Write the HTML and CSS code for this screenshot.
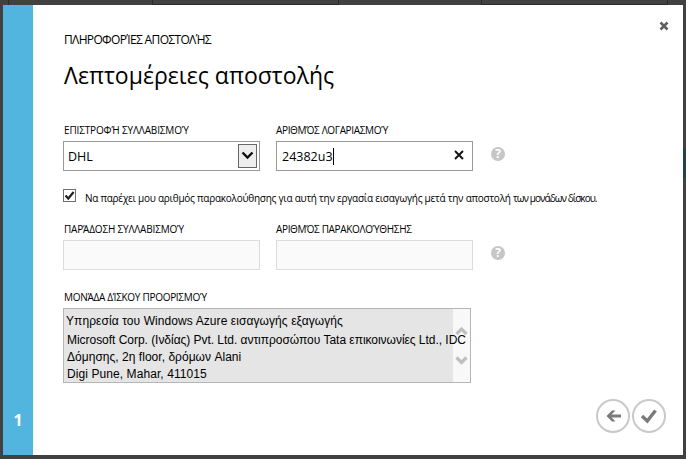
FILE: index.html
```html
<!DOCTYPE html>
<html lang="el">
<head>
<meta charset="utf-8">
<title>Λεπτομέρειες αποστολής</title>
<link rel="stylesheet" href="styles.css">
</head>
<body>
<div class="tile tile-a"></div>
<div class="tile tile-b"></div>
<div class="tile tile-c"></div>
<div class="edge"></div>
<main class="dialog">
  <aside class="step">1</aside>
  <section class="content">
    <svg class="close" viewBox="0 0 10 10"><path d="M1.5 1.5L8.5 8.5M8.5 1.5L1.5 8.500" stroke="#5f5f5f" stroke-width="2.6"/></svg>
    <p class="eyebrow"><span>ΠΛΗΡΟΦΟΡΊΕΣ ΑΠΟΣΤΟΛΉΣ</span></p>
    <h1><span>Λεπτομέρειες αποστολής</span></h1>
    <div class="row">
      <div class="field">
        <label class="l1">ΕΠΙΣΤΡΟΦΉ ΣΥΛΛΑΒΙΣΜΟΎ</label>
        <div class="box select"><span>DHL</span>
          <i class="drop"><svg viewBox="0 0 17 22"><path d="M3.5 7.500L8.500 12.500L13.500 7.500" fill="none" stroke="#111" stroke-width="2.4"/></svg></i>
        </div>
      </div>
      <div class="field">
        <label class="l2">ΑΡΙΘΜΌΣ ΛΟΓΑΡΙΑΣΜΟΎ</label>
        <div class="box"><span class="number">24382u3</span><b class="caret"></b>
          <svg class="clear" viewBox="0 0 10 10"><path d="M1 1L9 9M9 1L1 9" stroke="#111" stroke-width="1.9"/></svg>
        </div>
      </div>
      <span class="help">?</span>
    </div>
    <div class="check">
      <svg viewBox="0 0 13 13"><rect x=".5" y=".5" width="12" height="12" fill="#fff" stroke="#707070"/><path d="M2.500 6.500L5.300 9.500L10.600 3" fill="none" stroke="#222" stroke-width="2.200"/></svg>
      <span>Να παρέχει μου αριθμός παρακολούθησης για αυτή την εργασία εισαγωγής μετά την αποστολή <em>των μονάδων δίσκου.</em></span>
    </div>
    <div class="row row2">
      <div class="field">
        <label class="l3">ΠΑΡΆΔΟΣΗ ΣΥΛΛΑΒΙΣΜΟΎ</label>
        <div class="box off"></div>
      </div>
      <div class="field">
        <label class="l4">ΑΡΙΘΜΌΣ ΠΑΡΑΚΟΛΟΎΘΗΣΗΣ</label>
        <div class="box off"></div>
      </div>
      <span class="help">?</span>
    </div>
    <label class="l5">ΜΟΝΆΔΑ ΔΊΣΚΟΥ ΠΡΟΟΡΙΣΜΟΎ</label>
    <div class="address">
      <div class="scroll">
        <svg viewBox="0 0 17 73"><path d="M3.500 25L8.500 20L13.500 25M3.500 48.500L8.500 53.500L13.500 48.500" fill="none" stroke="#bfbfbf" stroke-width="3.200"/></svg>
      </div>
      <p class="a1">Υπηρεσία του Windows Azure εισαγωγής εξαγωγής</p>
      <p class="a2">Microsoft Corp. (Ινδίας) Pvt. Ltd. αντιπροσώπου Tata επικοινωνίες Ltd., IDC</p>
      <p class="a3">Δόμησης, 2η floor, δρόμων Alani</p>
      <p class="a4">Digi Pune, Mahar, 411015</p>
    </div>
    <div class="actions">
      <svg viewBox="0 0 34 34"><circle cx="17" cy="17" r="16" fill="#fff" stroke="#c9c9c9" stroke-width="2"/><path d="M12 17H25" fill="none" stroke="#7a7a7a" stroke-width="3"/><path d="M10.500 17L16 11.500H19.500L14.200 17L19.500 22.500H16Z" fill="#7a7a7a"/></svg>
      <svg viewBox="0 0 34 34"><circle cx="17" cy="17" r="16" fill="#fff" stroke="#c9c9c9" stroke-width="2"/><path d="M10 17L15.300 22L23.500 11.500" fill="none" stroke="#7a7a7a" stroke-width="3.400"/></svg>
    </div>
  </section>
</main>
</body>
</html>
```
FILE: styles.css
```css
* { box-sizing: border-box; margin: 0; padding: 0; }
body { width: 686px; height: 459px; padding: 5px 3px 4px; background: #414141; overflow: hidden; position: relative; font-family: "Open Sans", sans-serif; color: #000; }
.tile { position: absolute; top: 0; height: 5px; border: 1px solid #2a2a2a; border-top: 0; }
.tile-a { left: 8px; width: 1px; border-width: 0 0 0 1px; }
.tile-b { left: 152px; width: 187px; }
.tile-c { left: 481px; width: 187px; }
.edge { position: absolute; left: 683px; top: 148px; width: 3px; height: 30px; background: #20434c; }
.dialog { display: flex; width: 680px; height: 450px; background: #fff; position: relative; }
.step { width: 30px; background: #52b5df; color: #fff; font: bold 16px/20px "Open Sans", sans-serif; text-align: center; padding-top: 405px; }
.content { flex: 1; padding-left: 30px; position: relative; }
.close { position: absolute; right: 14px; top: 16px; width: 10px; height: 10px; }
.eyebrow { height: 20px; margin-top: 25px; padding-left: 1px; font-size: 12px; line-height: 20px; white-space: nowrap; letter-spacing: -.65px; }
h1 { height: 36px; margin-top: 8px; padding-left: 1px; font-size: 23px; font-weight: 400; line-height: 35px; white-space: nowrap; letter-spacing: .03px; }
.row { display: flex; gap: 16px; margin-top: 28px; height: 49px; }
.field { width: 197px; }
label { display: block; height: 19px; font-size: 10px; line-height: 17px; white-space: nowrap; padding-left: 1px; }
.l1 { letter-spacing: -.14px; }
.l2 { letter-spacing: -.34px; padding-left: 0; }
.l3 { letter-spacing: -.18px; }
.l4 { letter-spacing: -.34px; padding-left: 0; }
.l5 { letter-spacing: -.29px; }
.box { display: flex; align-items: center; height: 30px; border: 1px solid #999; background: #fff; font-size: 12.5px; padding-left: 5px; }
.select { padding-left: 4px; }
.caret { width: 1px; height: 17px; background: #000; }
.clear { width: 10px; height: 10px; margin: 0 8px 2px auto; }
.drop { width: 19px; height: 24px; margin: 0 2px 0 auto; border: 1px solid #666; background: #eee; }
.drop svg { display: block; width: 17px; height: 22px; }
.off { background: #fafafa; border-color: #dcdcdc; }
.help { width: 14px; height: 14px; margin: 25px 0 0 2px; border-radius: 50%; background: #c6c6c6; color: #fff; font: bold 12px/14px "Open Sans", sans-serif; text-align: center; }
.check { display: flex; height: 15px; margin-top: 18px; gap: 9px; font-size: 10px; line-height: 19px; white-space: nowrap; letter-spacing: -.25px; }
.check svg { width: 13px; height: 13px; }
.check em { font-style: normal; letter-spacing: -.94px; }
.row2 { margin-top: 17px; }
.l5 { margin-top: 19px; }
.address { position: relative; width: 408px; height: 75px; border: 1px solid #b5b5b5; background: #e5e5e5; font: 12px/17px "Liberation Sans", sans-serif; white-space: nowrap; padding: 4px 0 0 3px; }
.address p { position: relative; height: 17px; }
.address .a1 { height: 19px; margin-left: -1px; letter-spacing: .08px; }
.a2 { letter-spacing: -.035px; }
.a3 { letter-spacing: .03px; }
.a4 { letter-spacing: .08px; }
.scroll { position: absolute; right: 0; top: 0; width: 17px; height: 73px; background: #f8f8f8; }
.scroll svg { display: block; width: 17px; height: 73px; }
.actions { position: absolute; right: 17px; bottom: 22px; display: flex; gap: 2px; }
.actions svg { width: 34px; height: 34px; }
```
